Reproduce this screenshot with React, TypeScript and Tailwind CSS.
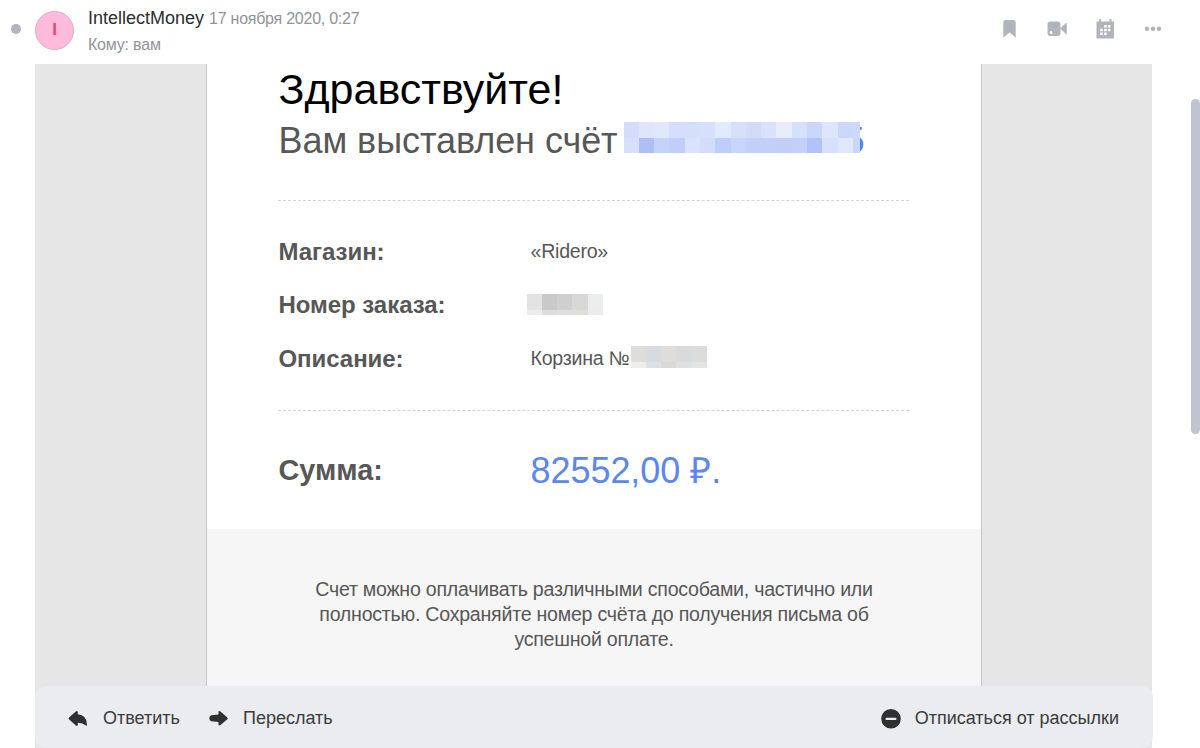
import type { ReactNode } from "react"

const invoiceTop = ["#d3dcfa", "#dfe5fb", "#e2e8fc", "#d5dffb", "#d4dffa", "#d6e0fb", "#e2eafd", "#d7e0fb", "#d2dcf9", "#d9e2fb", "#e7edfd", "#d6e0fb", "#cad7fa", "#dee6fc", "#ccd8f9", "#cdd9fa"]
const invoiceBottom = ["#d7dffb", "#aebff6", "#c6d2f9", "#c0cef9", "#dae2fc", "#d3ddfa", "#becdf9", "#c8d5fa", "#c1cff9", "#c1cff9", "#c0cef8", "#c4d0f9", "#b0c2f7", "#d7e1fc", "#e0e7fb", "#cbd7fa"]

const orderTop = ["#e3e3e3", "#c9c9c9", "#cfcfcf", "#d9d8d7", "#ecedef"]
const orderBottom = ["#ececec", "#dedddd", "#dfdfdf", "#dfdedd", "#ececed"]

const basketTop = ["#dfdddc", "#d7dade", "#dfdcda", "#d9dadb", "#dcdcdd"]
const basketBottom = ["#efeeed", "#dde0e5", "#dad9da", "#dee0e2", "#e4e4e5"]

function PixelRow({ colors, className }: { colors: string[]; className: string }) {
  return (
    <div className={`flex overflow-hidden ${className}`}>
      {colors.map((color, i) => (
        <span key={i} className="h-full w-[15.3px] shrink-0" style={{ backgroundColor: color }} />
      ))}
    </div>
  )
}

function Row({ label, children }: { label: string; children?: ReactNode }) {
  return (
    <div className="flex h-[53.5px] items-center">
      <div className="w-[252px] pb-[2px] text-[24px] font-bold tracking-[-0.05px]">{label}</div>
      {children}
    </div>
  )
}

function MailHeader() {
  return (
    <header className="flex h-16 shrink-0 items-start">
      <span className="mt-6 ml-[11px] size-2.5 rounded-full bg-[#b3b5bd]" />
      <div className="mt-[11px] ml-3.5 flex size-[39px] items-center justify-center rounded-full border border-[#e3a9c5] bg-[#ffbbdb] pb-0.5 text-[17px] font-bold text-[#e64675]">
        I
      </div>
      <div className="ml-3.5 flex-1 whitespace-nowrap pt-[5px]">
        <div className="flex h-[26px] items-center">
          <span className="text-[18px] text-[#2c2d2e]">IntellectMoney</span>
          <span className="ml-[5px] pt-px text-[16px] tracking-[-0.25px] text-[#919399]">17 ноября 2020, 0:27</span>
        </div>
        <div className="flex h-7 items-center text-[16px] tracking-[-0.2px] text-[#919399]">Кому: вам</div>
      </div>
      <div className="mr-[35px] flex gap-6 pt-[17px] text-[#b2b4bc]">
        <svg className="size-6" viewBox="0 0 24 24" fill="currentColor">
          <path d="M8.500 3h8q2.200 0 2.200 2.200V20.500L12.500 15.500l-6.200 5V5.200Q6.300 3 8.500 3Z" />
        </svg>
        <svg className="size-6" viewBox="0 0 24 24" fill="currentColor">
          <path
            fillRule="evenodd"
            d="M5.500 4.500h7a3 3 0 0 1 3 3v8.500a3 3 0 0 1-3 3h-7a3 3 0 0 1-3-3V7.500a3 3 0 0 1 3-3Zm.6 9.400a1.500 1.500 0 1 0 0 3 1.500 1.500 0 0 0 0-3Z"
          />
          <path d="m15.500 11 5.500-5q.8-.5.8.5v10q0 1-.8.5l-5.500-5Z" />
        </svg>
        <svg className="size-6" viewBox="0 0 24 24" fill="currentColor">
          <path d="M3.500 4.500h17.500v17h-17.500ZM6 2h2v4H6ZM16.500 2h2v4h-2Z" />
          <path
            fill="#fff"
            d="M11.200 8h2.500v2.500h-2.500ZM14.900 8h2.500v2.500h-2.500ZM7.200 11.700h2.500v2.500H7.200ZM11.200 11.700h2.500v2.500h-2.500ZM14.900 11.700h2.500v2.500h-2.500ZM7.200 15.400h2.500v2.500H7.200ZM11.200 15.400h2.500v2.500h-2.500Z"
          />
        </svg>
        <svg className="size-6" viewBox="0 0 24 24" fill="currentColor">
          <circle cx="6" cy="11.800" r="2.200" />
          <circle cx="12" cy="11.800" r="2.200" />
          <circle cx="18" cy="11.800" r="2.200" />
        </svg>
      </div>
    </header>
  )
}

function Letter() {
  return (
    <div className="mx-auto flex h-full w-[776px] flex-col border-x border-[#c6c6c6] bg-white whitespace-nowrap text-[#575757]">
      <div className="mr-[72px] ml-[71px] h-[137px] border-b border-dashed border-[#d3d3d3]">
        <h1 className="h-[52px] pl-px text-[43px] leading-[51px] text-black">Здравствуйте!</h1>
        <div className="relative flex h-12 items-center pt-px pl-px text-[36px] tracking-[-0.05px]">
          Вам выставлен счёт
          <span className="absolute left-[567px] text-[#5181ee]">5</span>
          <div className="absolute top-[6px] left-[346px]">
            <PixelRow colors={invoiceTop} className="h-4 w-[236px]" />
            <PixelRow colors={invoiceBottom} className="h-[15px] w-[236px]" />
          </div>
        </div>
      </div>

      <div className="mr-[72px] ml-[71px] h-[210px] border-b border-dashed border-[#d3d3d3] pt-[25px] pl-px">
        <Row label="Магазин:">
          <span className="pb-[3px] text-[19.6px] tracking-[-0.25px]">«Ridero»</span>
        </Row>
        <Row label="Номер заказа:">
          <div className="-mt-[3px] -ml-1">
            <PixelRow colors={orderTop} className="h-4 w-[77px]" />
            <PixelRow colors={orderBottom} className="h-[5px] w-[77px]" />
          </div>
        </Row>
        <Row label="Описание:">
          <span className="w-[100px] pb-[3px] text-[19.6px] tracking-[-0.25px]">Корзина №</span>
          <div className="-mt-[6px]">
            <PixelRow colors={basketTop} className="h-4 w-[76px]" />
            <PixelRow colors={basketBottom} className="h-[6px] w-[76px]" />
          </div>
        </Row>
      </div>

      <div className="ml-[72px] flex h-[118px] items-center pt-px">
        <div className="w-[252px] text-[28.8px] font-bold">Сумма:</div>
        <div className="text-[36px] tracking-[-0.05px] text-[#5b87ee]">82552,00 ₽.</div>
      </div>

      <div className="flex-1 bg-[#f6f6f6] pt-[48px] pl-px text-center text-[19.6px] leading-[25px] tracking-[-0.25px]">
        Счет можно оплачивать различными способами, частично или
        <br />
        полностью. Сохраняйте номер счёта до получения письма об
        <br />
        успешной оплате.
      </div>
    </div>
  )
}

function ActionBar() {
  return (
    <footer className="absolute bottom-0 left-0 flex h-[62px] w-[1118px] items-center rounded-xl bg-[#ebecef] pt-[3px] pr-[34px] pl-[33px] whitespace-nowrap text-[18px] text-[#3a3b3c]">
      <svg className="size-5" viewBox="0 0 20 20" fill="#2f2f30">
        <path d="M1 8.400 7.800 2.500q2-1.300 2 .8v1.900Q18.900 6 19 15.500q0 2.200-1.500.8-2.800-2.700-7.700-2.600v1.900q0 2.100-2 .8L1 10.200q-1-.9 0-1.800Z" />
      </svg>
      <span className="ml-[15px]">Ответить</span>
      <svg className="ml-[29px] size-5" viewBox="0 0 20 20" fill="#2f2f30">
        <path d="M2.300 6.300 9.500 5.600V3.300q0-2 2-.8l6.800 5.900q1 .9 0 1.800l-6.800 5.900q-2 1.200-2-.8V13l-7.200-.7Q.3 11.900.3 9.300t2-3Z" />
      </svg>
      <span className="ml-[14px]">Переслать</span>
      <svg className="ml-auto size-5" viewBox="0 0 20 20">
        <circle cx="10" cy="9.800" r="9.800" fill="#2f2f30" />
        <rect x="4.500" y="8.700" width="11" height="2.300" rx="1" fill="#ebecef" />
      </svg>
      <span className="ml-[14px]">Отписаться от рассылки</span>
    </footer>
  )
}

export default function App() {
  return (
    <div className="relative flex h-[748px] w-[1200px] flex-col overflow-hidden bg-white font-['Liberation_Sans',Arial,sans-serif]">
      <MailHeader />
      <main className="relative ml-[35px] h-[684px] w-[1117px] bg-[#e6e6e6]">
        <Letter />
        <ActionBar />
      </main>
      <div className="absolute top-[99px] right-0 h-[335px] w-[9px] rounded-full bg-[#c0c4d0]" />
    </div>
  )
}
